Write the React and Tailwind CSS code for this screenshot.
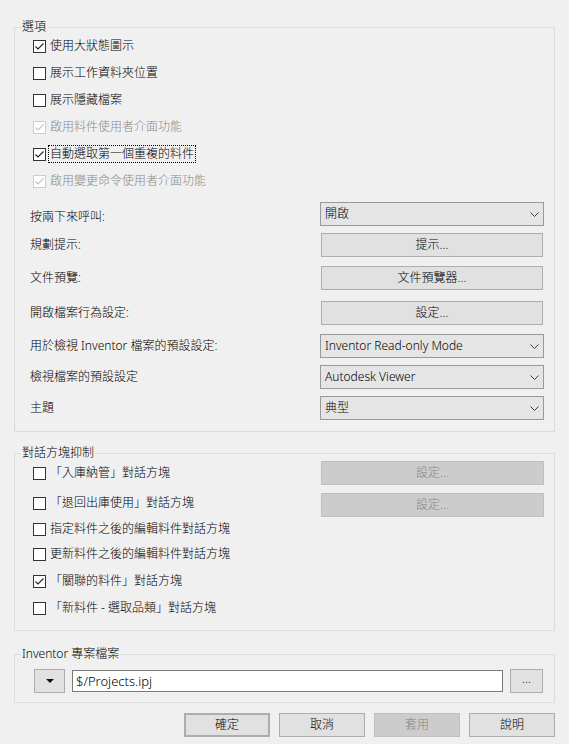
import React from "react";

const Check = ({ checked, disabled }) => (
  <span
    className={`flex h-[13px] w-[13px] shrink-0 items-center justify-center border bg-white ${
      disabled ? "border-[#cccccc]" : "border-[#333333]"
    }`}
  >
    {checked && (
      <svg width="11" height="11" viewBox="0 0 11 11">
        <path
          d="M1.5 5.5 L4 8 L9.5 2.5"
          fill="none"
          stroke={disabled ? "#c4c4c4" : "#222222"}
          strokeWidth="1.1"
        />
      </svg>
    )}
  </span>
);

const CheckRow = ({ label, checked, disabled, focus, className = "" }) => (
  <div className={`flex items-center gap-[2px] pl-[18px] ${className}`}>
    <Check checked={checked} disabled={disabled} />
    <span
      className={`px-[1px] leading-[16px] ${disabled ? "text-[#8a8a8a]" : "text-black"} ${
        focus ? "border border-dotted border-black" : "border border-transparent"
      }`}
    >
      {label}
    </span>
  </div>
);

const Chevron = () => (
  <svg width="9" height="5" viewBox="0 0 9 5" className="mr-[4px]">
    <path d="M0.5 0.5 L4.5 4.5 L8.5 0.5" fill="none" stroke="#404040" strokeWidth="1" />
  </svg>
);

const Select = ({ value }) => (
  <div className="flex h-[24px] w-[224px] items-center justify-between border border-[#999999] bg-[#e5e5e5] pl-[4px]">
    <span className="leading-[16px]">{value}</span>
    <Chevron />
  </div>
);

const Btn = ({ label, disabled, className = "" }) => (
  <div
    className={`flex h-[24px] items-center justify-center border leading-[16px] ${
      disabled
        ? "border-[#bfbfbf] bg-[#cccccc] text-[#838383]"
        : "border-[#adadad] bg-[#e1e1e1] text-black"
    } ${className}`}
  >
    {label}
  </div>
);

const FieldRow = ({ label, children, className = "" }) => (
  <div className={`flex h-[24px] items-center ${className}`}>
    <div className="w-[305px] pl-[15px] leading-[16px]">{label}</div>
    {children}
  </div>
);

export default function App() {
  return (
    <div
      className="h-[744px] w-[569px] overflow-hidden bg-[#f0f0f0] pt-[19px] text-[12px] font-light text-black"
      style={{ fontFamily: '"Noto Sans", "Noto Sans CJK TC", sans-serif' }}
    >
      {/* 選項 */}
      <fieldset className="ml-[14px] w-[541px] border border-[#dcdcdc] pb-[11px]">
        <legend className="ml-[6px] px-[1px] leading-[16px]">選項</legend>
        <div className="flex flex-col gap-[5px]">
          <CheckRow className="h-[22px]" label="使用大狀態圖示" checked />
          <CheckRow className="h-[22px]" label="展示工作資料夾位置" />
          <CheckRow className="h-[22px]" label="展示隱藏檔案" />
          <CheckRow className="h-[22px]" label="啟用料件使用者介面功能" checked disabled />
          <CheckRow className="h-[22px]" label="自動選取第一個重複的料件" checked focus />
          <CheckRow className="h-[22px]" label="啟用變更命令使用者介面功能" checked disabled />
        </div>
        <FieldRow className="mt-[10px]" label={<span className="relative top-[3px]">按兩下來呼叫:</span>}>
          <Select value="開啟" />
        </FieldRow>
        <FieldRow className="mt-[7px]" label="規劃提示:">
          <Btn className="ml-[1px] w-[222px]" label="提示..." />
        </FieldRow>
        <FieldRow className="mt-[9px]" label="文件預覽:">
          <Btn className="ml-[1px] w-[222px]" label="文件預覽器..." />
        </FieldRow>
        <FieldRow className="mt-[11px]" label="開啟檔案行為設定:">
          <Btn className="ml-[1px] w-[222px]" label="設定..." />
        </FieldRow>
        <FieldRow className="mt-[9px]" label="用於檢視 Inventor 檔案的預設設定:">
          <Select value="Inventor Read-only Mode" />
        </FieldRow>
        <FieldRow className="mt-[7px]" label="檢視檔案的預設設定">
          <Select value="Autodesk Viewer" />
        </FieldRow>
        <FieldRow className="mt-[7px]" label="主題">
          <Select value="典型" />
        </FieldRow>
      </fieldset>

      {/* 對話方塊抑制 */}
      <fieldset className="ml-[14px] mt-[13px] w-[541px] border border-[#dcdcdc] pb-[11px]">
        <legend className="ml-[6px] px-[1px] leading-[16px]">對話方塊抑制</legend>
        <div className="flex h-[24px] items-center justify-between pr-[10px]">
          <CheckRow label="「入庫納管」對話方塊" />
          <Btn disabled className="w-[223px]" label="設定..." />
        </div>
        <div className="mt-[8px] flex h-[24px] items-start justify-between pr-[10px]">
          <CheckRow className="mt-[1px]" label="「退回出庫使用」對話方塊" />
          <Btn disabled className="w-[223px]" label="設定..." />
        </div>
        <CheckRow className="mt-[1px] h-[22px]" label="指定料件之後的編輯料件對話方塊" />
        <CheckRow className="mt-[3px] h-[22px]" label="更新料件之後的編輯料件對話方塊" />
        <CheckRow className="mt-[5px] h-[22px]" label="「關聯的料件」對話方塊" checked />
        <CheckRow className="mt-[5px] h-[22px]" label="「新料件 - 選取品類」對話方塊" />
      </fieldset>

      {/* Inventor 專案檔案 */}
      <fieldset className="ml-[14px] mt-[15px] w-[541px] border border-[#dcdcdc] pb-[9px]">
        <legend className="ml-[6px] px-[1px] leading-[16px]">Inventor 專案檔案</legend>
        <div className="mt-[7px] flex items-center pl-[19px]">
          <div className="flex h-[24px] w-[31px] items-center justify-center border border-[#adadad] bg-[#e1e1e1]">
            <svg width="8" height="4" viewBox="0 0 8 4">
              <path d="M0 0 L8 0 L4 4 Z" fill="#111111" />
            </svg>
          </div>
          <div className="ml-[7px] flex h-[22px] w-[431px] items-center border border-[#7a7a7a] bg-white pl-[3px] text-[13px] leading-[16px]">
            $/Projects.ipj
          </div>
          <Btn className="ml-[7px] w-[33px] pb-[4px]" label="..." />
        </div>
      </fieldset>

      <div className="mt-[10px] flex justify-end gap-[9px] pr-[14px]">
        <Btn className="w-[86px] border-2 border-[#0078d7]" label="確定" />
        <Btn className="w-[86px]" label="取消" />
        <Btn disabled className="w-[86px]" label="套用" />
        <Btn className="w-[86px]" label="說明" />
      </div>
    </div>
  );
}
